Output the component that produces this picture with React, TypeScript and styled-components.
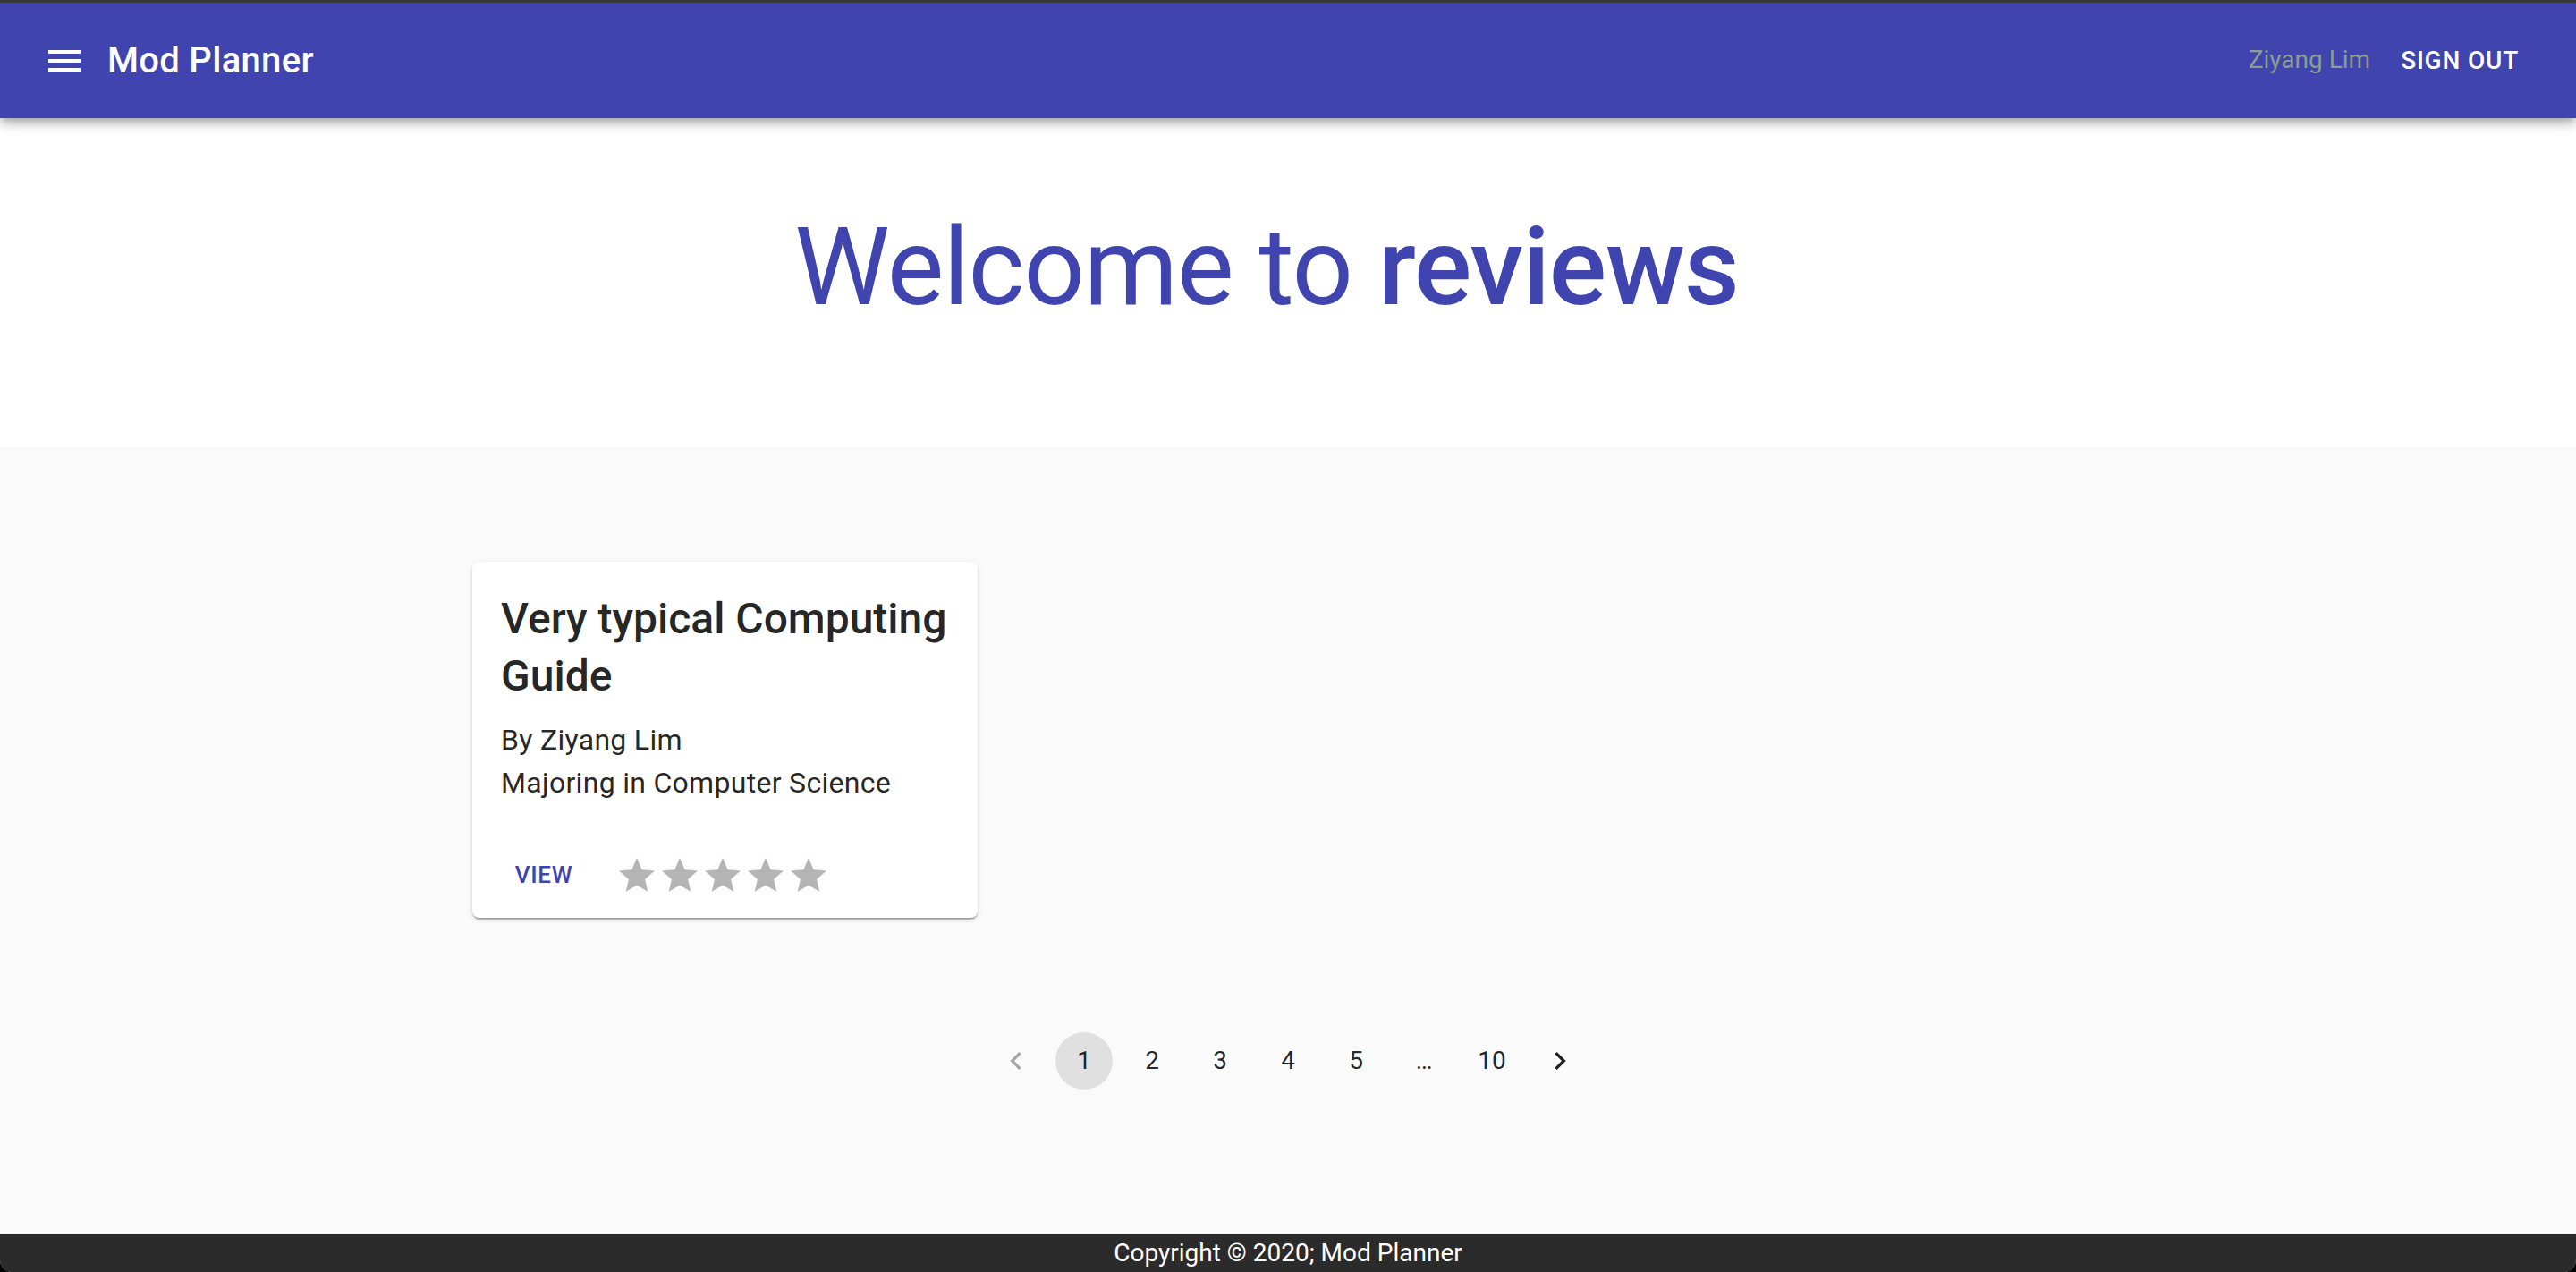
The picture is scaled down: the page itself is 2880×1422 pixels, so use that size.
import React from "react";
import styled, { createGlobalStyle } from "styled-components";

const Global = createGlobalStyle`
  html, body { margin: 0; padding: 0; background: #000; }
  body { font-family: Roboto, "Liberation Sans", Arial, sans-serif; -webkit-font-smoothing: antialiased; }
  * { box-sizing: border-box; }
`;

const Frame = styled.div`
  height: 1422px;
  display: flex;
  flex-direction: column;
  border-top: 3px solid #3a3a3c;
  border-radius: 0 0 14px 14px;
  overflow: hidden;
  background: #fafafa;
  box-shadow: inset 0 -2px 0 #555;
`;

const AppBar = styled.header`
  position: relative;
  z-index: 2;
  height: 129px;
  flex: none;
  display: flex;
  align-items: center;
  padding: 0 48px;
  background: #3f44ae;
  color: #fff;
  box-shadow: 0 4px 8px -2px rgba(0,0,0,0.2), 0 8px 10px 0 rgba(0,0,0,0.14), 0 2px 20px 0 rgba(0,0,0,0.12);
`;

const MenuButton = styled.button`
  width: 96px;
  height: 96px;
  margin-left: -24px;
  padding: 24px;
  border: 0;
  background: transparent;
  color: #fff;
  display: flex;
  align-items: center;
  justify-content: center;
  svg { width: 48px; height: 48px; fill: currentColor; display: block; }
`;

const Brand = styled.div`
  font-size: 40px;
  font-weight: 500;
  letter-spacing: 0.3px;
  line-height: 1.6;
  flex: 1;
`;

const UserName = styled.span`
  font-size: 28px;
  color: #8c9b94;
  margin-right: 18px;
  line-height: 1.43;
`;

const TextButton = styled.button<{ $color?: string; $small?: boolean }>`
  border: 0;
  background: transparent;
  font-family: inherit;
  font-weight: 500;
  text-transform: uppercase;
  letter-spacing: 0.02857em;
  color: ${(p) => p.$color || "#fff"};
  font-size: ${(p) => (p.$small ? "26px" : "28px")};
  line-height: 1.75;
  padding: ${(p) => (p.$small ? "8px 10px" : "12px 16px")};
  min-width: 128px;
  border-radius: 8px;
  cursor: pointer;
`;

const Hero = styled.section`
  flex: none;
  background: #fff;
  text-align: center;
  padding: 95px 0 129px 0;
`;

const HeroTitle = styled.h2`
  margin: 0;
  font-size: 120px;
  line-height: 1.2;
  font-weight: 400;
  letter-spacing: -1px;
  color: #3f44ae;
  padding-right: 48px;
  b { font-weight: 500; }
`;

const Main = styled.main`
  flex: 1;
  padding-top: 128px;
  display: flex;
  flex-direction: column;
  align-items: center;
`;

const Container = styled.div`
  width: 1920px;
  padding: 0 48px;
`;

const Grid = styled.div`
  display: grid;
  grid-template-columns: repeat(3, 1fr);
  gap: 64px;
`;

const Card = styled.div`
  background: #fff;
  border-radius: 8px;
  box-shadow: 0 4px 2px -2px rgba(0,0,0,0.2), 0 2px 2px 0 rgba(0,0,0,0.14), 0 2px 6px 0 rgba(0,0,0,0.12);
  overflow: hidden;
`;

const CardContent = styled.div`
  padding: 32px 32px 33px 32px;
`;

const CardTitle = styled.h5`
  margin: 0 0 0.32em 0;
  font-size: 48px;
  font-weight: 500;
  line-height: 1.334;
  color: rgba(0,0,0,0.87);
`;

const Body = styled.p`
  margin: 0;
  font-size: 32px;
  line-height: 1.5;
  letter-spacing: 0.3px;
  color: rgba(0,0,0,0.87);
`;

const CardActions = styled.div`
  display: flex;
  align-items: center;
  padding: 16px;
  gap: 16px;
`;

const Stars = styled.div`
  display: flex;
  svg { width: 48px; height: 48px; fill: #b5b5b5; display: block; }
`;

const Pager = styled.nav`
  margin-top: 128px;
  display: flex;
  align-items: center;
`;

const PageItem = styled.button<{ $selected?: boolean; $disabled?: boolean }>`
  width: 64px;
  height: 64px;
  margin: 0 6px;
  border: 0;
  border-radius: 32px;
  padding: 0;
  font-family: inherit;
  font-size: 28px;
  color: rgba(0,0,0,0.87);
  background: ${(p) => (p.$selected ? "#e0e0e0" : "transparent")};
  opacity: ${(p) => (p.$disabled ? 0.38 : 1)};
  display: flex;
  align-items: center;
  justify-content: center;
  svg { width: 40px; height: 40px; fill: currentColor; display: block; }
`;

const Ellipsis = styled.span`
  width: 64px;
  margin: 0 6px;
  text-align: center;
  font-size: 28px;
  color: rgba(0,0,0,0.87);
`;

const Footer = styled.footer`
  flex: none;
  background: #2b2b2b;
  color: #fff;
  text-align: center;
  font-size: 28px;
  line-height: 42px;
  height: 43px;
  padding-top: 1px;
`;

const starPath = "M12 17.27L18.18 21l-1.64-7.03L22 9.24l-7.19-.61L12 2 9.19 8.63 2 9.24l5.46 4.73L5.82 21z";

const Star = () => (
  <svg viewBox="0 0 24 24"><path d={starPath} /></svg>
);

export default function App() {
  return (
    <>
      <Global />
      <Frame>
        <AppBar>
          <MenuButton aria-label="menu">
            <svg viewBox="0 0 24 24"><path d="M3 18h18v-2H3v2zm0-5h18v-2H3v2zm0-7v2h18V6H3z" /></svg>
          </MenuButton>
          <Brand>Mod Planner</Brand>
          <UserName>Ziyang Lim</UserName>
          <TextButton>Sign Out</TextButton>
        </AppBar>
        <Hero>
          <HeroTitle>Welcome to <b>reviews</b></HeroTitle>
        </Hero>
        <Main>
          <Container>
            <Grid>
              <Card>
                <CardContent>
                  <CardTitle>Very typical Computing Guide</CardTitle>
                  <Body>By Ziyang Lim</Body>
                  <Body>Majoring in Computer Science</Body>
                </CardContent>
                <CardActions>
                  <TextButton $small $color="#3f44ae">View</TextButton>
                  <Stars>
                    {[0, 1, 2, 3, 4].map((i) => <Star key={i} />)}
                  </Stars>
                </CardActions>
              </Card>
            </Grid>
          </Container>
          <Pager>
            <PageItem $disabled aria-label="previous">
              <svg viewBox="0 0 24 24"><path d="M15.41 7.41L14 6l-6 6 6 6 1.41-1.41L10.83 12z" /></svg>
            </PageItem>
            {[1, 2, 3, 4, 5].map((n) => (
              <PageItem key={n} $selected={n === 1}>{n}</PageItem>
            ))}
            <Ellipsis>…</Ellipsis>
            <PageItem>10</PageItem>
            <PageItem aria-label="next">
              <svg viewBox="0 0 24 24"><path d="M10 6L8.59 7.41 13.17 12l-4.58 4.59L10 18l6-6z" /></svg>
            </PageItem>
          </Pager>
        </Main>
        <Footer>Copyright © 2020; Mod Planner</Footer>
      </Frame>
    </>
  );
}
